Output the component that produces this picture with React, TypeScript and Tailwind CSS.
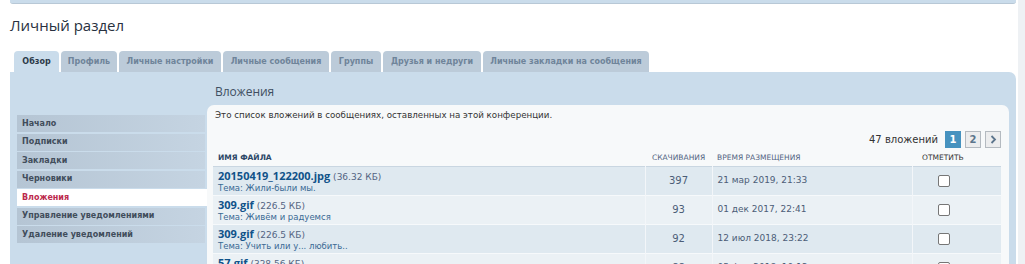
import React from "react";

const tabs = [
  { label: "Обзор", w: "w-[45px]", active: true },
  { label: "Профиль", w: "w-[56px]" },
  { label: "Личные настройки", w: "w-[102px]" },
  { label: "Личные сообщения", w: "w-[106px]" },
  { label: "Группы", w: "w-[50px]" },
  { label: "Друзья и недруги", w: "w-[98px]" },
  { label: "Личные закладки на сообщения", w: "w-[166px]" },
];

const navItems = [
  "Начало",
  "Подписки",
  "Закладки",
  "Черновики",
  "Вложения",
  "Управление уведомлениями",
  "Удаление уведомлений",
];

const rows = [
  { file: "20150419_122200.jpg", size: "36.32 КБ", topic: "Тема: Жили-были мы.", dl: "397", date: "21 мар 2019, 21:33" },
  { file: "309.gif", size: "226.5 КБ", topic: "Тема: Живём и радуемся", dl: "93", date: "01 дек 2017, 22:41" },
  { file: "309.gif", size: "226.5 КБ", topic: "Тема: Учить или у... любить..", dl: "92", date: "12 июл 2018, 23:22" },
  { file: "57.gif", size: "328.56 КБ", topic: "Тема: Всё о нас", dl: "88", date: "05 фев 2018, 10:12" },
];

export default function App() {
  return (
    <div className="w-[1025px] h-[264px] overflow-hidden bg-[#eef1f4] flex font-['DejaVu_Sans',sans-serif]">
      <div className="w-[1018px] bg-white pl-[10px] pr-[2px] flex flex-col">
        {/* top strip */}
        <div className="shrink-0 h-[4px] bg-[#cadceb] border-b border-[#b8c8d6] rounded-b-[3px]" />

        <h2 className="shrink-0 mt-[10px] h-[22px] leading-[22px] text-[15px] text-[#28313f] font-['Open_Sans',sans-serif]">
          Личный раздел
        </h2>

        {/* tabs */}
        <div className="shrink-0 mt-[15px] flex gap-[2px] pl-[4px] h-[21px]">
          {tabs.map((t) => (
            <div
              key={t.label}
              className={`${t.w} h-[21px] rounded-t-[4px] flex items-center justify-center text-[8px] font-bold whitespace-nowrap ${
                t.active ? "bg-[#cadceb] text-[#2d3a49]" : "bg-[#bccbd9] text-[#6f849a]"
              }`}
            >
              {t.label}
            </div>
          ))}
        </div>

        {/* panel */}
        <div className="flex-1 min-h-0 bg-[#cadceb] rounded-tr-[7px] flex pl-[7px] pr-[7px]">
          <div className="w-[188px] pt-[43px] flex flex-col">
            {navItems.map((n) => {
              const active = n === "Вложения";
              return (
                <div
                  key={n}
                  className={`shrink-0 h-[17px] mb-[1.5px] pl-[5px] flex items-center text-[8px] font-bold whitespace-nowrap ${
                    active
                      ? "bg-white text-[#bc2a4d] -mr-[2px]"
                      : "bg-gradient-to-r from-[#b5c5d4] to-[#c5d4e2] text-[#414d5b]"
                  }`}
                >
                  {n}
                </div>
              );
            })}
          </div>

          <div className="flex-1 ml-[2px] pt-[10px] flex flex-col min-w-0 min-h-0">
            <h3 className="shrink-0 h-[19px] leading-[19px] pl-[8px] mb-[4px] text-[12px] text-[#404e61] font-['Open_Sans',sans-serif]">
              Вложения
            </h3>

            <div className="flex-1 min-h-0 bg-[#f7f9fa] rounded-t-[7px] pl-[6px] pr-[8px] pt-[4px]">
              <p className="pl-[2px] text-[8.7px] leading-[12px] text-[#333]">
                Это список вложений в сообщениях, оставленных на этой конференции.
              </p>

              <div className="mt-[10px] h-[17px] flex items-center justify-end gap-[4px]">
                <span className="text-[10px] text-[#333] mr-[3px]">47 вложений</span>
                <span className="w-[16px] h-[17px] flex items-center justify-center bg-[#4692bf] border border-[#4692bf] text-white text-[10px] font-bold">
                  1
                </span>
                <span className="w-[16px] h-[17px] flex items-center justify-center bg-[#ecedee] border border-[#b4bac0] text-[#5c758c] text-[10px] font-bold">
                  2
                </span>
                <span className="w-[16px] h-[17px] flex items-center justify-center bg-[#ecedee] border border-[#b4bac0] text-[#5c758c]">
                  <svg width="7" height="9" viewBox="0 0 7 9">
                    <path d="M1.5 1 L5 4.5 L1.5 8" fill="none" stroke="currentColor" strokeWidth="1.8" />
                  </svg>
                </span>
              </div>

              <table className="mt-[1px] w-full border-collapse table-fixed">
                <colgroup>
                  <col />
                  <col className="w-[67px]" />
                  <col className="w-[200px]" />
                  <col className="w-[89px]" />
                </colgroup>
                <thead>
                  <tr className="h-[17px] border-b border-[#c9d6e1]">
                    <th className="pl-[5px] text-left text-[7.5px] font-bold text-[#2a4666]">ИМЯ ФАЙЛА</th>
                    <th className="text-center text-[7.5px] font-normal text-[#536482] whitespace-nowrap">СКАЧИВАНИЯ</th>
                    <th className="pl-[5px] text-left text-[7.5px] font-normal text-[#536482]">ВРЕМЯ РАЗМЕЩЕНИЯ</th>
                    <th className="pl-[10px] text-left text-[7.5px] font-normal text-[#333]">ОТМЕТИТЬ</th>
                  </tr>
                </thead>
                <tbody>
                  {rows.map((r, i) => (
                    <tr
                      key={i}
                      className={`h-[29px] border-t border-[#f6f9fb] ${i % 2 === 0 ? "bg-[#dfe9f0]" : "bg-[#ebf1f5]"}`}
                    >
                      <td className="pl-[5px] pt-[1px] pb-[1px] align-top">
                        <div className="h-[14px] leading-[14px] whitespace-nowrap">
                          <span className="text-[11px] font-bold text-[#105289] font-['Open_Sans',sans-serif]">{r.file}</span>
                          <span className="text-[9px] text-[#536482]"> ({r.size})</span>
                        </div>
                        <div className="h-[12px] leading-[12px] text-[8.5px] text-[#3a6a94] whitespace-nowrap">
                          {r.topic}
                        </div>
                      </td>
                      <td className="text-center text-[10px] text-[#4c5d77] border-l border-[#f3f6f9]">{r.dl}</td>
                      <td className="pl-[5px] text-[9px] text-[#4c5d77] border-l border-[#f3f6f9] whitespace-nowrap">
                        {r.date}
                      </td>
                      <td className="pl-[25px] border-l border-[#f3f6f9]">
                        <div className="w-[12px] h-[12px] bg-white border border-[#767676] rounded-[2px]" />
                      </td>
                    </tr>
                  ))}
                </tbody>
              </table>
            </div>
          </div>
        </div>
      </div>
    </div>
  );
}
